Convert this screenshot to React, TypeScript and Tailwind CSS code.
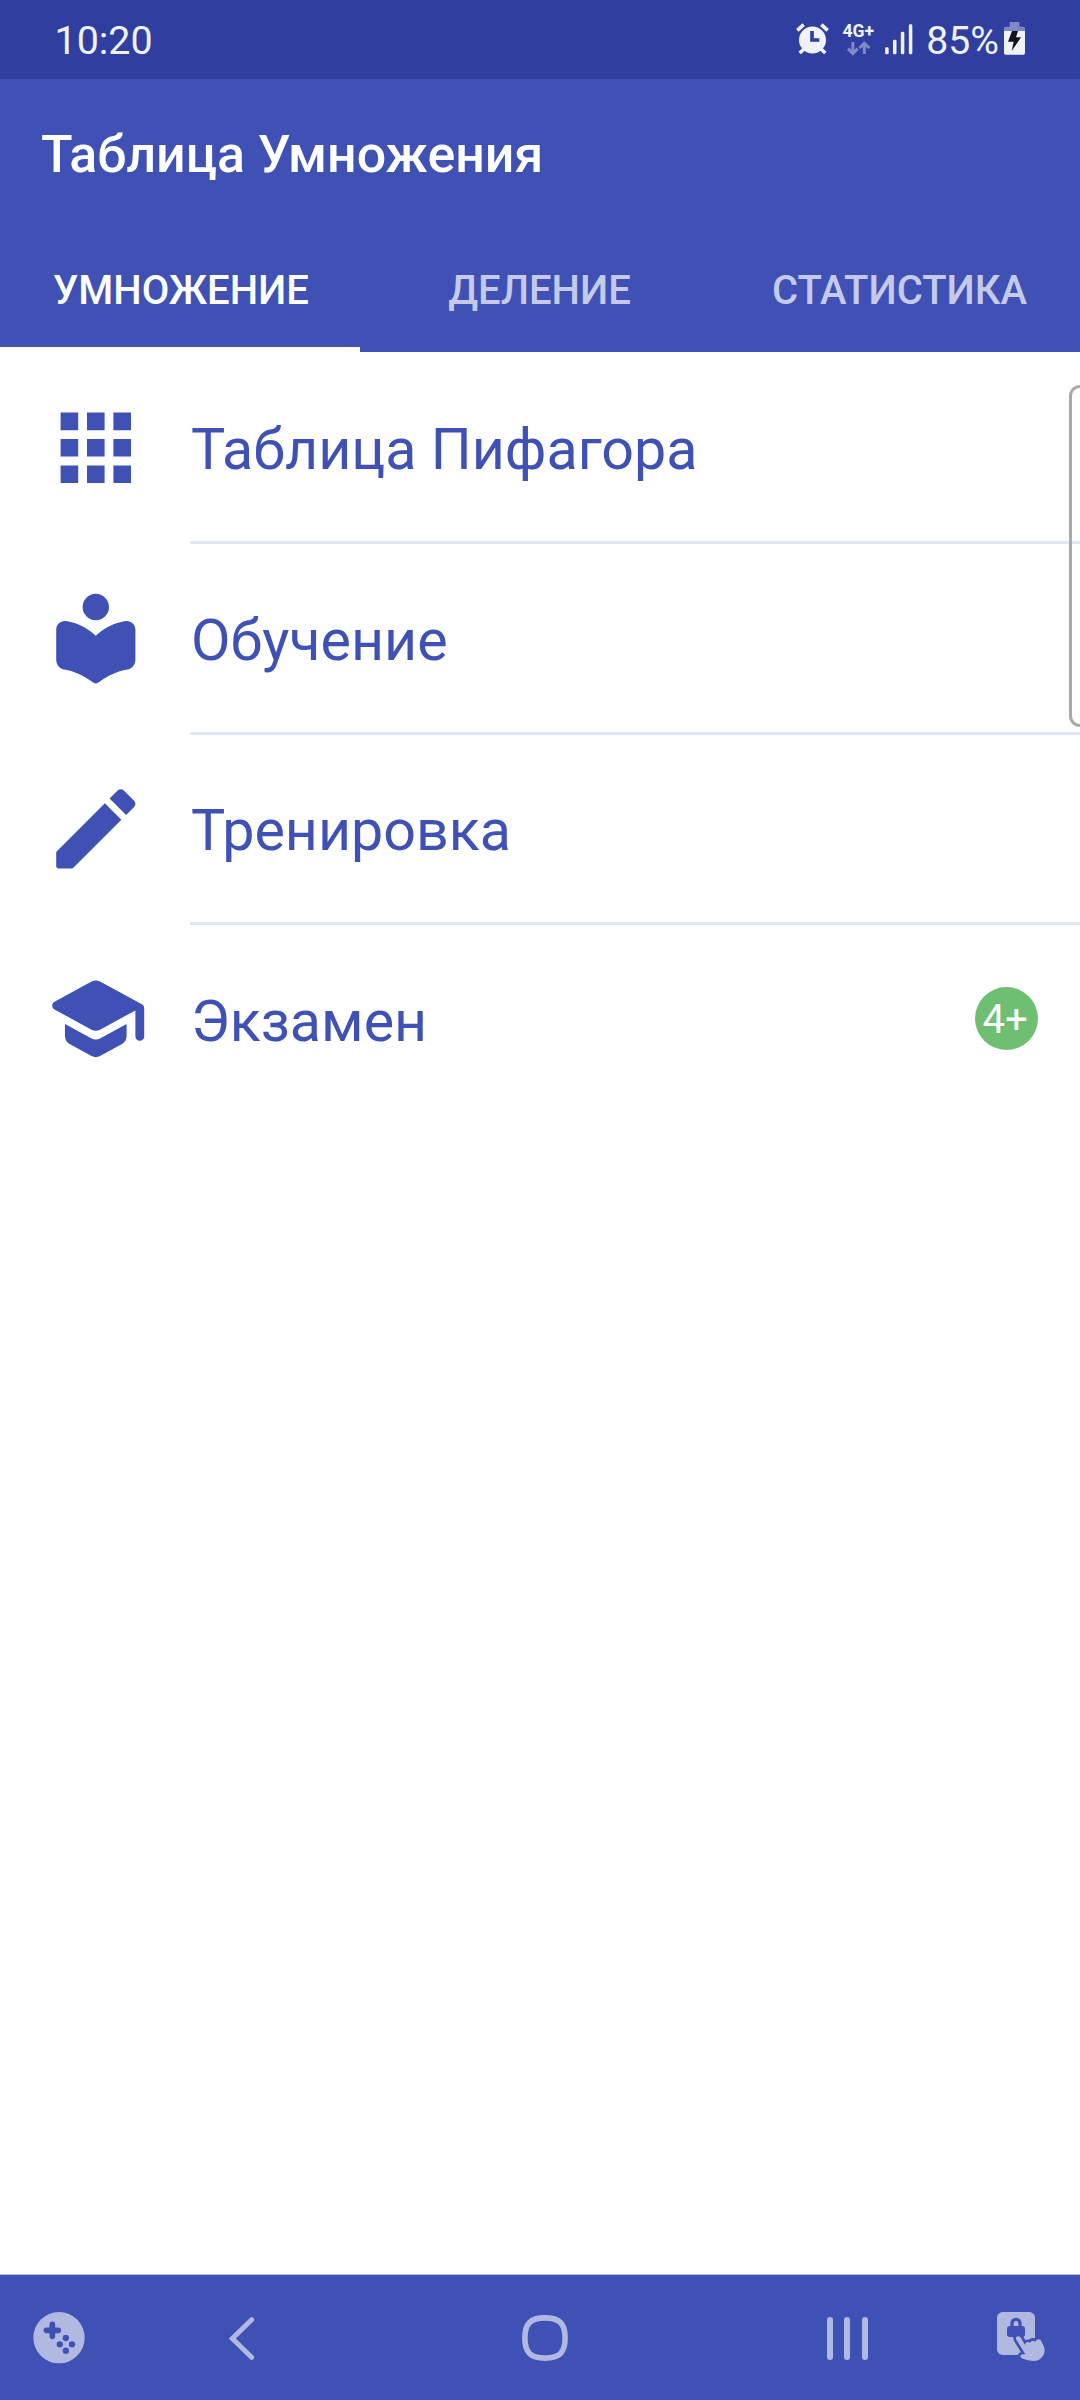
import type { ReactNode } from "react";

function AlarmIcon() {
  return (
    <svg className="w-[33px] h-[32px]" viewBox="0 0 99 96" fill="none">
      <path d="M4 22L23 5M95 22L76 5" stroke="#f0f1f9" strokeWidth={11} />
      <path d="M11 90L24 78M88 90L75 78" stroke="#f0f1f9" strokeWidth={11} />
      <circle cx={49.5} cy={51} r={40.5} fill="#f0f1f9" />
      <path d="M48 24V51H70" stroke="#303f9f" strokeWidth={11} />
    </svg>
  );
}

function NetworkIcon() {
  return (
    <div className="w-[32px] flex flex-col items-center">
      <span className="text-[17.6px] leading-[17px] font-bold text-[#f0f1f9]">4G+</span>
      <svg className="w-[23px] h-[15px] mt-px" viewBox="0 0 69 45" fill="none" stroke="#8088c6" strokeWidth={9}>
        <path d="M17.5 3V38M3 23L17.5 38L32 23" />
        <path d="M52 39V7M37 21L52 7L67 21" />
      </svg>
    </div>
  );
}

function SignalIcon() {
  return (
    <svg className="w-[28px] h-[31px]" viewBox="0 0 84 93" fill="#f0f1f9">
      <rect x={0.5} y={70} width={10.5} height={21} rx={4} />
      <rect x={24} y={47} width={10.5} height={44} rx={4} />
      <rect x={47.5} y={23} width={10.5} height={68} rx={4} />
      <rect x={71.5} y={1} width={10.5} height={90} rx={4} />
    </svg>
  );
}

function BatteryIcon() {
  return (
    <svg className="w-[21px] h-[33px] mb-px" viewBox="0 0 63 99">
      <path d="M17 0h29v14h12a5 5 0 0 1 5 5v9H0v-9a5 5 0 0 1 5-5h12z" fill="#8088c6" />
      <path d="M0 27h63v66a5 5 0 0 1-5 5H5a5 5 0 0 1-5-5z" fill="#f0f1f9" />
      <path d="M24 27H42L36 46H51L23 87L29 59H12Z" fill="#11131f" />
    </svg>
  );
}

function StatusBar() {
  return (
    <div className="h-[79px] bg-[#303f9f] pl-[54.5px] pr-[55px] flex items-center justify-between text-[#f0f1f9]">
      <span className="text-[39.4px] leading-none pt-[3px]">10:20</span>
      <div className="flex items-center">
        <AlarmIcon />
        <div className="ml-[13px] mr-[11px] pt-px">
          <NetworkIcon />
        </div>
        <SignalIcon />
        <span className="ml-[13px] mr-[5px] text-[39.2px] leading-none pt-[4px]">85%</span>
        <BatteryIcon />
      </div>
    </div>
  );
}

const tabs = ["Умножение", "Деление", "Статистика"];

function AppHeader() {
  return (
    <header className="bg-[#3f51b5] text-white font-medium">
      <h1 className="h-[150px] pl-[41px] pt-px flex items-center text-[51.9px] leading-none font-medium">
        Таблица Умножения
      </h1>
      <nav className="grid grid-cols-3 h-[123px]">
        {tabs.map((tab, i) => (
          <button
            key={tab}
            className={
              i === 0
                ? "uppercase text-[40px] leading-none pt-[6px] pl-[2px] border-b-5 border-white"
                : "uppercase text-[40px] leading-none text-[#c5cae9] pt-[6px] pr-px border-b-5 border-transparent"
            }
          >
            {tab}
          </button>
        ))}
      </nav>
    </header>
  );
}

function RowIcon({ children }: { children: ReactNode }) {
  return (
    <svg className="w-[105.6px] h-[105.6px] shrink-0" viewBox="0 0 24 24" fill="currentColor">
      {children}
    </svg>
  );
}

const rows = [
  {
    title: "Таблица Пифагора",
    icon: (
      <path d="M4 8h4V4H4v4zm6 12h4v-4h-4v4zm-6 0h4v-4H4v4zm0-6h4v-4H4v4zm6 0h4v-4h-4v4zm6-10v4h4V4h-4zm-6 4h4V4h-4v4zm6 6h4v-4h-4v4zm0 6h4v-4h-4v4z" />
    ),
  },
  {
    title: "Обучение",
    icon: (
      <>
        <circle cx={12} cy={5} r={3} />
        <path d="M12 11.55c-1.82-1.68-4.12-2.89-6.71-3.35C4.09 8 3 8.96 3 10.17v6.74c0 1.12.66 2.09 1.77 2.27 2.47.41 4.71 1.46 6.54 2.94.4.33.98.33 1.38 0 1.83-1.48 4.07-2.53 6.54-2.94 1.11-.18 1.77-1.15 1.77-2.27v-6.74c0-1.21-1.09-2.17-2.29-1.97-2.59.46-4.89 1.67-6.71 3.35z" />
      </>
    ),
  },
  {
    title: "Тренировка",
    icon: (
      <path d="M3 17.46v3.04c0 .28.22.5.5.5h3.04c.13 0 .26-.05.35-.15L17.81 9.94l-3.75-3.75L3.15 17.1c-.1.1-.15.22-.15.36zM20.71 7.04c.39-.39.39-1.02 0-1.41l-2.34-2.34c-.39-.39-1.02-.39-1.41 0l-1.83 1.83 3.75 3.75 1.83-1.83z" />
    ),
  },
  {
    title: "Экзамен",
    icon: (
      <path d="M5 13.18v2.81c0 .73.4 1.41 1.04 1.76l5 2.73c.6.33 1.32.33 1.92 0l5-2.73c.64-.35 1.04-1.03 1.04-1.76v-2.81l-6.04 3.3c-.6.33-1.32.33-1.92 0L5 13.18zm6.04-9.66l-8.43 4.6c-.69.38-.69 1.38 0 1.76l8.43 4.6c.6.33 1.32.33 1.92 0L21 10.09V16c0 .55.45 1 1 1s1-.45 1-1V9.59c0-.37-.2-.7-.52-.88l-9.52-5.19c-.6-.32-1.32-.32-1.92 0z" />
    ),
    badge: "4+",
  },
];

function MenuList() {
  return (
    <ul className="pt-[1.5px] text-[#3f51b5]">
      {rows.map((row, i) => (
        <li key={row.title} className="h-[190.5px] flex pl-[42.5px]">
          <div className="flex items-center pb-[2px] pr-[41.9px]">
            <RowIcon>{row.icon}</RowIcon>
          </div>
          <div className="grow flex flex-col">
            <div className="grow flex items-center justify-between pl-px pr-[42.5px]">
              <span className="text-[57.4px] leading-none pt-[5px]">{row.title}</span>
              {row.badge && (
                <span className="w-[63px] h-[63px] rounded-full bg-[#6fbf73] text-white text-[40px] leading-none flex items-center justify-center pt-[2px] pr-[2px]">
                  {row.badge}
                </span>
              )}
            </div>
            <div className={i < rows.length - 1 ? "h-[3px] bg-[#e2e5f4]" : "h-[3px]"} />
          </div>
        </li>
      ))}
    </ul>
  );
}

function NavigationBar() {
  return (
    <footer className="h-[126px] bg-[#3f51b5] border-t border-[#b2b9e1] pl-[33px] flex items-center">
      <svg className="w-[52px] h-[52px]" viewBox="0 0 156 156">
        <circle cx={78} cy={77} r={77} fill="#b2b9e1" />
        <path d="M58 37V73M40 55H76" stroke="#3f51b5" strokeWidth={17} strokeLinecap="round" />
        <g fill="#3f51b5">
          <circle cx={98.5} cy={78} r={9.5} />
          <circle cx={80.5} cy={97} r={9.5} />
          <circle cx={117} cy={97} r={9.5} />
          <circle cx={98.5} cy={116} r={9.5} />
        </g>
      </svg>
      <svg className="w-[27px] h-[45px] ml-[143px] mt-[2px]" viewBox="0 0 81 135" fill="none">
        <path d="M71 11L13 67.5L71 124" stroke="#b2b9e1" strokeWidth={15} strokeLinecap="round" />
      </svg>
      <svg className="w-[46px] h-[46px] ml-[266.5px] mt-px" viewBox="0 0 46 46" fill="none">
        <path
          d="M23 2.9C37.5 2.9 43.1 8.5 43.1 23S37.5 43.1 23 43.1 2.9 37.5 2.9 23 8.5 2.9 23 2.9z"
          stroke="#b2b9e1"
          strokeWidth={5.6}
        />
      </svg>
      <div className="flex gap-[11.4px] ml-[259.5px] mt-[2px]">
        <span className="w-[6px] h-[43px] rounded-full bg-[#b2b9e1]" />
        <span className="w-[6px] h-[43px] rounded-full bg-[#b2b9e1]" />
        <span className="w-[6px] h-[43px] rounded-full bg-[#b2b9e1]" />
      </div>
      <svg className="w-[49px] h-[50px] ml-[129px] mb-[2px]" viewBox="0 0 147 150">
        <rect width={114} height={129} rx={17} fill="#b2b9e1" />
        <path d="M45 45V34a12 12 0 0 1 24 0v11" fill="none" stroke="#3f51b5" strokeWidth={10} />
        <rect x={30} y={42} width={54} height={33} rx={8} fill="#3f51b5" />
        {/* pointing hand with a gap cut out of the card behind it */}
        <path
          d="M58 75C64 70 71 74 74 81L86 103 84 97C88 88 95 90 99 92 103 85 110 84 115 89 121 79 129 81 133 88L141 104C148 125 134 146 111 147 97 147 84 143 75 139 68 135 69 127 78 127L85 127 58 83C57 80 56 77 58 75z"
          fill="#b2b9e1"
          stroke="#3f51b5"
          strokeWidth={16}
          strokeLinejoin="round"
          paintOrder="stroke"
        />
      </svg>
    </footer>
  );
}

export default function App() {
  return (
    <div className="relative w-[1080px] h-[2400px] overflow-hidden bg-[#fefefe] font-['Roboto',sans-serif] flex flex-col">
      <StatusBar />
      <AppHeader />
      <main className="grow">
        <MenuList />
      </main>
      <NavigationBar />
      {/* edge panel handle */}
      <div className="absolute right-0 top-[385px] w-[11px] h-[342px] border-3 border-r-0 border-[#a9a9a9] rounded-l-[12px]" />
    </div>
  );
}
